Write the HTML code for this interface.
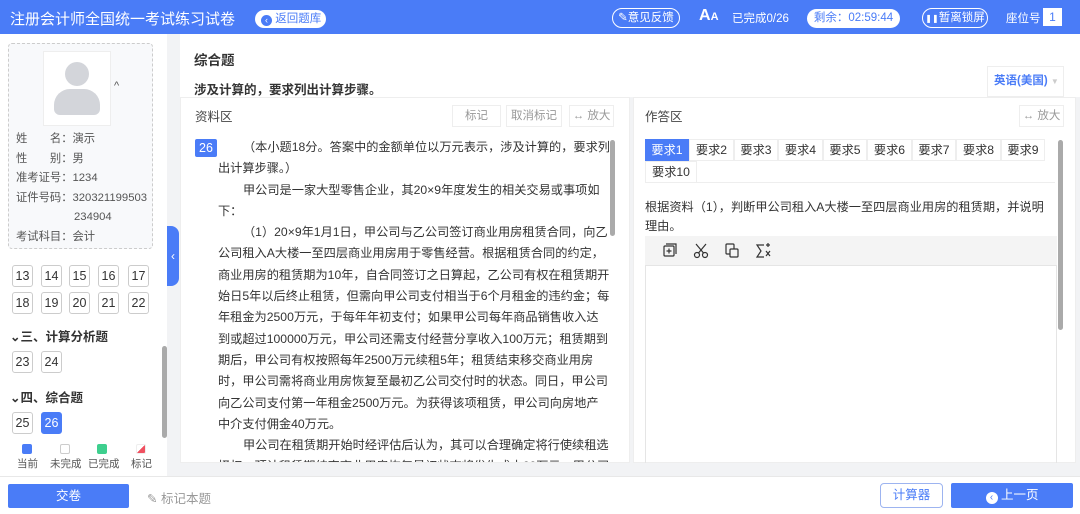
<!DOCTYPE html>
<html><head><meta charset="utf-8"><style>
*{margin:0;padding:0;box-sizing:border-box}
body{width:1080px;height:514px;overflow:hidden;font-family:"Liberation Sans","Noto Sans CJK SC",sans-serif;background:#f2f3f5;position:relative;color:#333}
.a{position:absolute;white-space:nowrap}
.hdr{left:0;top:0;width:1080px;height:34px;background:#4a7cf7;color:#fff}
.pill{position:absolute;border:1px solid #fff;border-radius:10px;height:20px;font-size:11.5px;line-height:18px;text-align:center;color:#fff;white-space:nowrap}
.nb{position:absolute;width:21px;height:22px;border:1px solid #ccc;border-radius:3px;font-size:12.5px;line-height:20px;text-align:center;background:#fff;color:#333}
.sec{position:absolute;left:10px;font-size:12.5px;font-weight:bold;color:#333}
.btn{position:absolute;border:1px solid #eee;font-size:11.5px;color:#999;text-align:center;line-height:20px;height:22px;white-space:nowrap}
.txt{font-size:12.2px;line-height:21.3px;color:#333;white-space:nowrap}
.txt i{font-style:normal;display:inline-block;width:25px}
.tab{position:absolute;height:22px;font-size:12.2px;line-height:21px;text-align:center;border:1px solid #eee;background:#fff;color:#333}
</style></head><body>
<div class="a hdr">
 <div class="a" style="left:10px;top:8px;font-size:15px">注册会计师全国统一考试练习试卷</div>
 <div class="a" style="left:255px;top:10px;width:71px;height:18px;background:#fff;border-radius:9px;color:#4a7cf7;font-size:11.5px;line-height:18px;padding-left:6px"><span style="display:inline-block;width:11px;height:11px;border-radius:50%;background:#4a7cf7;color:#fff;font-size:9px;line-height:11px;text-align:center;vertical-align:-1px">‹</span> 返回题库</div>
 <div class="pill" style="left:612px;top:8px;width:68px">✎意见反馈</div>
 <div class="a" style="left:699px;top:7px;font-size:16px;font-weight:bold">A<span style="font-size:11px">A</span></div>
 <div class="a" style="left:732px;top:10px;font-size:11.5px">已完成0/26</div>
 <div class="a" style="left:807px;top:9px;width:93px;height:19px;background:#fff;border-radius:10px;color:#4a7cf7;font-size:11.5px;line-height:19px;text-align:center">剩余：02:59:44</div>
 <div class="pill" style="left:922px;top:8px;width:66px"><span style="font-size:8px">❚❚</span>暂离锁屏</div>
 <div class="a" style="left:1006px;top:10px;font-size:11.5px">座位号</div>
 <div class="a" style="left:1043px;top:8px;width:19px;height:18px;background:#fff;color:#4a7cf7;font-size:12px;text-align:center;line-height:18px">1</div>
</div>
<!-- sidebar -->
<div class="a" style="left:0;top:34px;width:167px;height:442px;background:#fff"></div>
<div class="a" style="left:8px;top:43px;width:145px;height:206px;border:1px dashed #ccc;border-radius:4px;background:#f8f9fb"></div>
<div class="a" style="left:43px;top:51px;width:68px;height:75px;background:#fff;border:1px solid #eee"></div>
<div class="a" style="left:65px;top:62px;width:24px;height:24px;border-radius:50%;background:#d3d5da"></div>
<div class="a" style="left:54px;top:89px;width:46px;height:26px;border-radius:16px 16px 6px 6px;background:#d3d5da"></div>
<div class="a" style="left:114px;top:80px;font-size:11px;color:#555">^</div>
<div class="a" style="left:16px;top:130px;font-size:11.3px;line-height:19.5px;color:#555">
<div>姓　　名：演示</div><div>性　　别：男</div><div>准考证号：1234</div><div>证件号码：320321199503</div><div style="padding-left:58px">234904</div><div>考试科目：会计</div></div>
<div class="a" style="left:167px;top:226px;width:12px;height:60px;background:#4a7cf7;border-radius:0 8px 8px 0;color:#fff;font-size:12px;line-height:60px;text-align:center">‹</div>
<div class="nb" style="left:12px;top:265px">13</div><div class="nb" style="left:41px;top:265px">14</div><div class="nb" style="left:69px;top:265px">15</div><div class="nb" style="left:98px;top:265px">16</div><div class="nb" style="left:128px;top:265px">17</div>
<div class="nb" style="left:12px;top:292px">18</div><div class="nb" style="left:41px;top:292px">19</div><div class="nb" style="left:69px;top:292px">20</div><div class="nb" style="left:98px;top:292px">21</div><div class="nb" style="left:128px;top:292px">22</div>
<div class="sec" style="top:326px">⌄三、计算分析题</div>
<div class="nb" style="left:12px;top:351px">23</div><div class="nb" style="left:41px;top:351px">24</div>
<div class="sec" style="top:387px">⌄四、综合题</div>
<div class="nb" style="left:12px;top:412px">25</div><div class="nb" style="left:41px;top:412px;background:#4a7cf7;border-color:#4a7cf7;color:#fff">26</div>
<div class="a" style="left:162px;top:346px;width:5px;height:92px;background:#aaa;border-radius:3px"></div>
<div class="a" style="left:22px;top:444px;width:10px;height:10px;background:#4a7cf7;border-radius:2px"></div>
<div class="a" style="left:60px;top:444px;width:10px;height:10px;border:1px solid #ccc;border-radius:2px"></div>
<div class="a" style="left:97px;top:444px;width:10px;height:10px;background:#3ecf8e;border-radius:2px"></div>
<div class="a" style="left:136px;top:444px;width:10px;height:10px;border-radius:2px;background:linear-gradient(135deg,#fff 50%,#f05060 50%);border:1px solid #eee"></div>
<div class="a" style="left:17px;top:456px;font-size:10.5px;color:#555">当前</div>
<div class="a" style="left:50px;top:456px;font-size:10.5px;color:#555">未完成</div>
<div class="a" style="left:88px;top:456px;font-size:10.5px;color:#555">已完成</div>
<div class="a" style="left:131px;top:456px;font-size:10.5px;color:#555">标记</div>
<!-- main top -->
<div class="a" style="left:180px;top:34px;width:900px;height:63px;background:#fff"></div>
<div class="a" style="left:194px;top:49px;font-size:13.5px;font-weight:bold">综合题</div>
<div class="a" style="left:194px;top:79px;font-size:12.5px;font-weight:bold">涉及计算的，要求列出计算步骤。</div>
<div class="a" style="left:987px;top:66px;width:77px;height:31px;border:1px solid #eee;background:#fff;font-size:11.5px;color:#4a7cf7;font-weight:bold;line-height:29px;padding-left:6px">英语(美国) <span style="color:#ccc;font-size:8px">▼</span></div>
<!-- left panel -->
<div class="a" style="left:180px;top:97px;width:450px;height:366px;background:#fff;border:1px solid #eee"></div>
<div class="a" style="left:195px;top:106px;font-size:12.5px;color:#444">资料区</div>
<div class="btn" style="left:452px;top:105px;width:49px">标记</div>
<div class="btn" style="left:506px;top:105px;width:56px">取消标记</div>
<div class="btn" style="left:569px;top:105px;width:45px">↔ 放大</div>
<div class="a" style="left:195px;top:139px;width:22px;height:18px;background:#4a7cf7;color:#fff;font-size:12.5px;text-align:center;line-height:18px;border-radius:2px">26</div>
<div class="a txt" style="left:218px;top:137px;width:394px;height:325px;overflow:hidden">
<i></i>（本小题18分。答案中的金额单位以万元表示，涉及计算的，要求列<br>
出计算步骤。）<br>
<i></i>甲公司是一家大型零售企业，其20×9年度发生的相关交易或事项如<br>
下：<br>
<i></i>（1）20×9年1月1日，甲公司与乙公司签订商业用房租赁合同，向乙<br>
公司租入A大楼一至四层商业用房用于零售经营。根据租赁合同的约定，<br>
商业用房的租赁期为10年，自合同签订之日算起，乙公司有权在租赁期开<br>
始日5年以后终止租赁，但需向甲公司支付相当于6个月租金的违约金；每<br>
年租金为2500万元，于每年年初支付；如果甲公司每年商品销售收入达<br>
到或超过100000万元，甲公司还需支付经营分享收入100万元；租赁期到<br>
期后，甲公司有权按照每年2500万元续租5年；租赁结束移交商业用房<br>
时，甲公司需将商业用房恢复至最初乙公司交付时的状态。同日，甲公司<br>
向乙公司支付第一年租金2500万元。为获得该项租赁，甲公司向房地产<br>
中介支付佣金40万元。<br>
<i></i>甲公司在租赁期开始时经评估后认为，其可以合理确定将行使续租选<br>
择权；预计租赁期结束商业用房恢复最初状态将发生成本60万元。甲公司<br>
对租入的使用权资产采用年限平均法自租赁期开始日计提折旧，预计净残<br>
值为零。
</div>
<div class="a" style="left:610px;top:140px;width:5px;height:96px;background:#aaa;border-radius:3px"></div>
<!-- right panel -->
<div class="a" style="left:633px;top:97px;width:443px;height:366px;background:#fff;border:1px solid #eee"></div>
<div class="a" style="left:645px;top:106px;font-size:12.5px;color:#444">作答区</div>
<div class="btn" style="left:1019px;top:105px;width:45px">↔ 放大</div>
<div class="a" style="left:645px;top:139px;width:410px;height:44px;border-bottom:1px solid #eee"></div>
<div class="tab" style="left:645px;top:139px;width:44px;background:#4a7cf7;color:#fff;border-color:#4a7cf7">要求1</div>
<div class="tab" style="left:689px;top:139px;width:45px">要求2</div>
<div class="tab" style="left:734px;top:139px;width:44px">要求3</div>
<div class="tab" style="left:778px;top:139px;width:45px">要求4</div>
<div class="tab" style="left:823px;top:139px;width:44px">要求5</div>
<div class="tab" style="left:867px;top:139px;width:45px">要求6</div>
<div class="tab" style="left:912px;top:139px;width:44px">要求7</div>
<div class="tab" style="left:956px;top:139px;width:45px">要求8</div>
<div class="tab" style="left:1001px;top:139px;width:44px">要求9</div>
<div class="tab" style="left:645px;top:161px;width:52px">要求10</div>
<div class="a txt" style="left:645px;top:198px;line-height:19px">根据资料（1），判断甲公司租入A大楼一至四层商业用房的租赁期，并说明<br>理由。</div>
<div class="a" style="left:645px;top:236px;width:412px;height:30px;background:#f4f4f4;border-bottom:1px solid #e5e5e5"></div>
<div class="a" style="left:645px;top:266px;width:412px;height:197px;border-left:1px solid #e5e5e5;border-right:1px solid #e5e5e5"></div>
<svg class="a" style="left:660px;top:241px" width="120" height="20" viewBox="0 0 120 20" fill="none" stroke="#333" stroke-width="1.2">
<rect x="4" y="5" width="10" height="10" rx="1"/><path d="M6 3h10v10M9 7.5v5M6.5 10h5"/>
<circle cx="37" cy="14" r="2.5"/><circle cx="45" cy="14" r="2.5"/><path d="M38.5 12L46 3M43.5 12L36 3"/>
<rect x="66" y="3" width="8" height="10" rx="1"/><rect x="70" y="8" width="8" height="8" rx="1" fill="#f4f4f4"/>
<path d="M104 4h-7l4 6-4 6h7M106 10l4 5M110 10l-4 5M108 2v4M106 4h4"/>
</svg>
<div class="a" style="left:1058px;top:140px;width:5px;height:190px;background:#aaa;border-radius:3px"></div>
<!-- footer -->
<div class="a" style="left:0;top:476px;width:1080px;height:38px;background:#fff;border-top:1px solid #e8e8e8"></div>
<div class="a" style="left:8px;top:484px;width:121px;height:24px;background:#4a7cf7;border-radius:2px;color:#fff;font-size:12.5px;line-height:24px;text-align:center">交卷</div>
<div class="a" style="left:147px;top:488px;font-size:12.5px;color:#999">✎ 标记本题</div>
<div class="a" style="left:880px;top:483px;width:63px;height:25px;border:1px solid #9db4f0;border-radius:4px;color:#4a7cf7;font-size:12.5px;line-height:23px;text-align:center">计算器</div>
<div class="a" style="left:951px;top:483px;width:122px;height:25px;background:#4a7cf7;border-radius:2px;color:#fff;font-size:12.5px;line-height:25px;text-align:center"><span style="display:inline-block;width:12px;height:12px;border-radius:50%;background:#fff;color:#4a7cf7;font-size:10px;line-height:12px;vertical-align:-1px">‹</span> 上一页</div>
</body></html>
